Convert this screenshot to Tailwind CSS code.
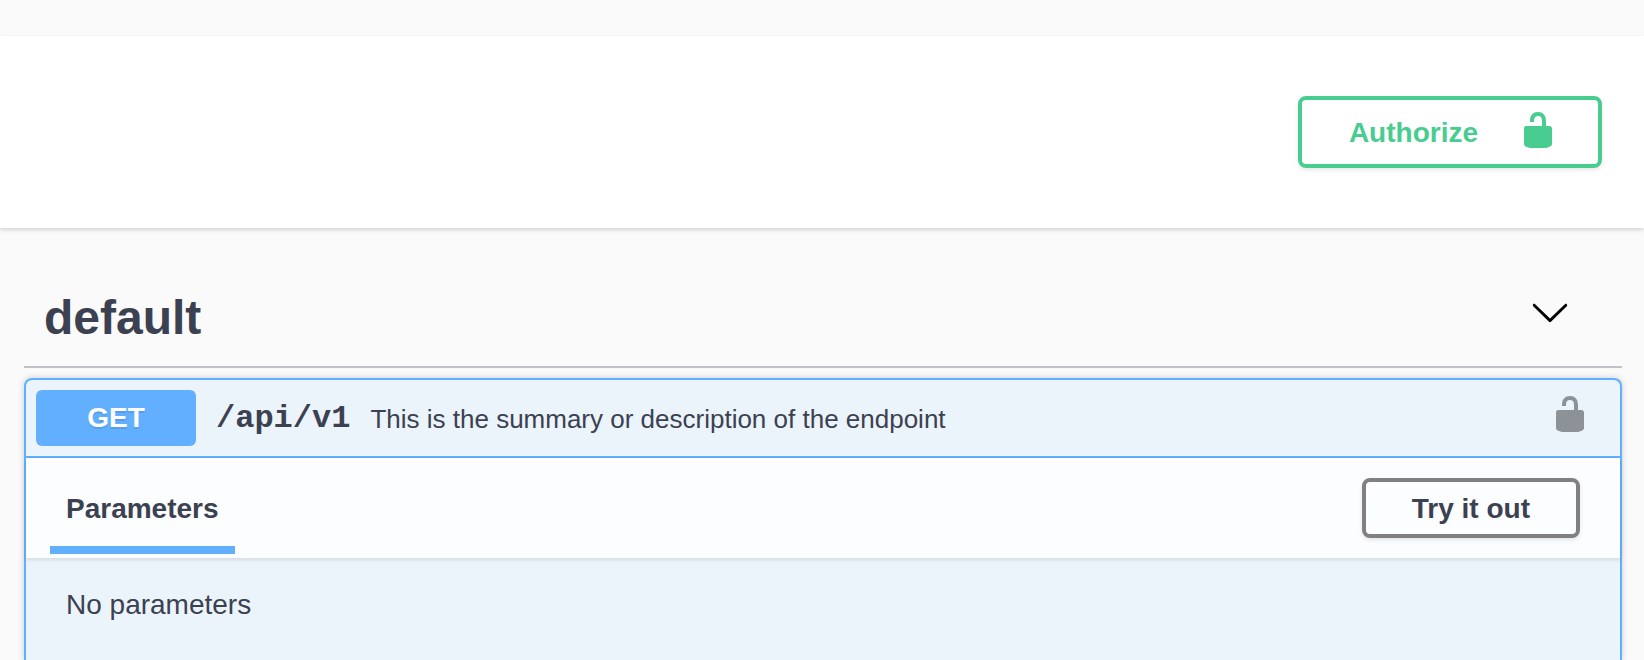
<!DOCTYPE html>
<html lang="en">
<head>
<meta charset="utf-8">
<title>API documentation</title>
<script src="https://cdn.jsdelivr.net/npm/@tailwindcss/browser@4"></script>
</head>
<body class="flex min-h-screen flex-col bg-[#fafafa] pt-9 font-['Liberation_Sans',Arial,sans-serif] text-[28px] leading-8 text-[#3b4151]">
<svg class="hidden" aria-hidden="true">
  <symbol id="unlocked" viewBox="0 0 20 20"><path d="M15.8 8H14V5.6C14 2.703 12.665 1 10 1 7.334 1 6 2.703 6 5.6V6h2v-.801C8 3.754 8.797 3 10 3c1.203 0 2 .754 2 2.199V8H4c-.553 0-1 .646-1 1.199V17c0 .549.428 1.139.951 1.307l1.197.387C5.672 18.861 6.55 19 7.1 19h5.8c.549 0 1.428-.139 1.951-.307l1.196-.387c.524-.167.953-.757.953-1.306V9.199C17 8.646 16.352 8 15.8 8z"/></symbol>
  <symbol id="arrow-down" viewBox="0 0 20 20"><path d="M17.418 6.109c.272-.268.709-.268.979 0s.271.701 0 .969l-7.908 7.83c-.27.268-.707.268-.979 0l-7.908-7.83c-.27-.268-.27-.701 0-.969s.709-.268.979 0L10 13.25l7.418-7.141z"/></symbol>
</svg>

<header class="flex justify-end bg-white px-[42px] py-[60px] shadow-[0_2px_4px_0_rgba(0,0,0,0.15)]">
  <button type="button" class="flex h-[72px] items-center gap-10 rounded-lg border-4 border-[#49cc90] pr-10 pl-[47px] font-bold text-[#49cc90] shadow-[0_2px_4px_rgba(0,0,0,0.1)]">
    <span class="pt-0.5">Authorize</span>
    <svg class="-mt-1 size-10 fill-current" aria-hidden="true"><use href="#unlocked"/></svg>
  </button>
</header>

<main class="flex flex-1 flex-col pt-10 pr-[22px] pl-6">
  <div class="flex h-[100px] items-center justify-between border-b-2 border-[#3b4151]/30 pr-[52px] pl-5">
    <h2 class="pt-0.5 text-5xl font-bold">default</h2>
    <button type="button" class="-mt-2.5 text-black" aria-label="Collapse default"><svg class="size-10 fill-current" aria-hidden="true"><use href="#arrow-down"/></svg></button>
  </div>

  <section class="mt-[10px] flex flex-1 flex-col rounded-t-lg border-2 border-b-0 border-[#61affe] bg-[#ebf3fb] shadow-[0_0_6px_rgba(0,0,0,0.19)]">
    <div class="flex items-center border-b-2 border-[#61affe] p-[10px]">
      <span class="flex h-14 w-40 items-center justify-center rounded-md bg-[#61affe] font-bold text-white [text-shadow:0_2px_0_rgba(0,0,0,0.1)]">GET</span>
      <code class="pt-0.5 pl-5 font-['Liberation_Mono',monospace] text-[32px] font-bold">/api/v1</code>
      <span class="flex-1 pt-0.5 pl-5 text-[26px]">This is the summary or description of the endpoint</span>
      <button type="button" class="-mt-2 mr-5 text-black/40" aria-label="Authorization"><svg class="size-10 fill-current" aria-hidden="true"><use href="#unlocked"/></svg></button>
    </div>
    <div class="flex h-[100px] items-center justify-between bg-white/80 pr-10 pl-6 shadow-[0_2px_4px_rgba(0,0,0,0.1)]">
      <h3 class="mt-[35px] self-start border-b-8 border-[#61affe] px-4 pb-[21px] font-bold">Parameters</h3>
      <button type="button" class="flex h-[60px] items-center rounded-lg border-4 border-[#808080] px-[46px] font-bold shadow-[0_2px_4px_rgba(0,0,0,0.1)]"><span class="pt-0.5">Try it out</span></button>
    </div>
    <p class="px-10 pt-[31px]">No parameters</p>
  </section>
</main>
</body>
</html>
